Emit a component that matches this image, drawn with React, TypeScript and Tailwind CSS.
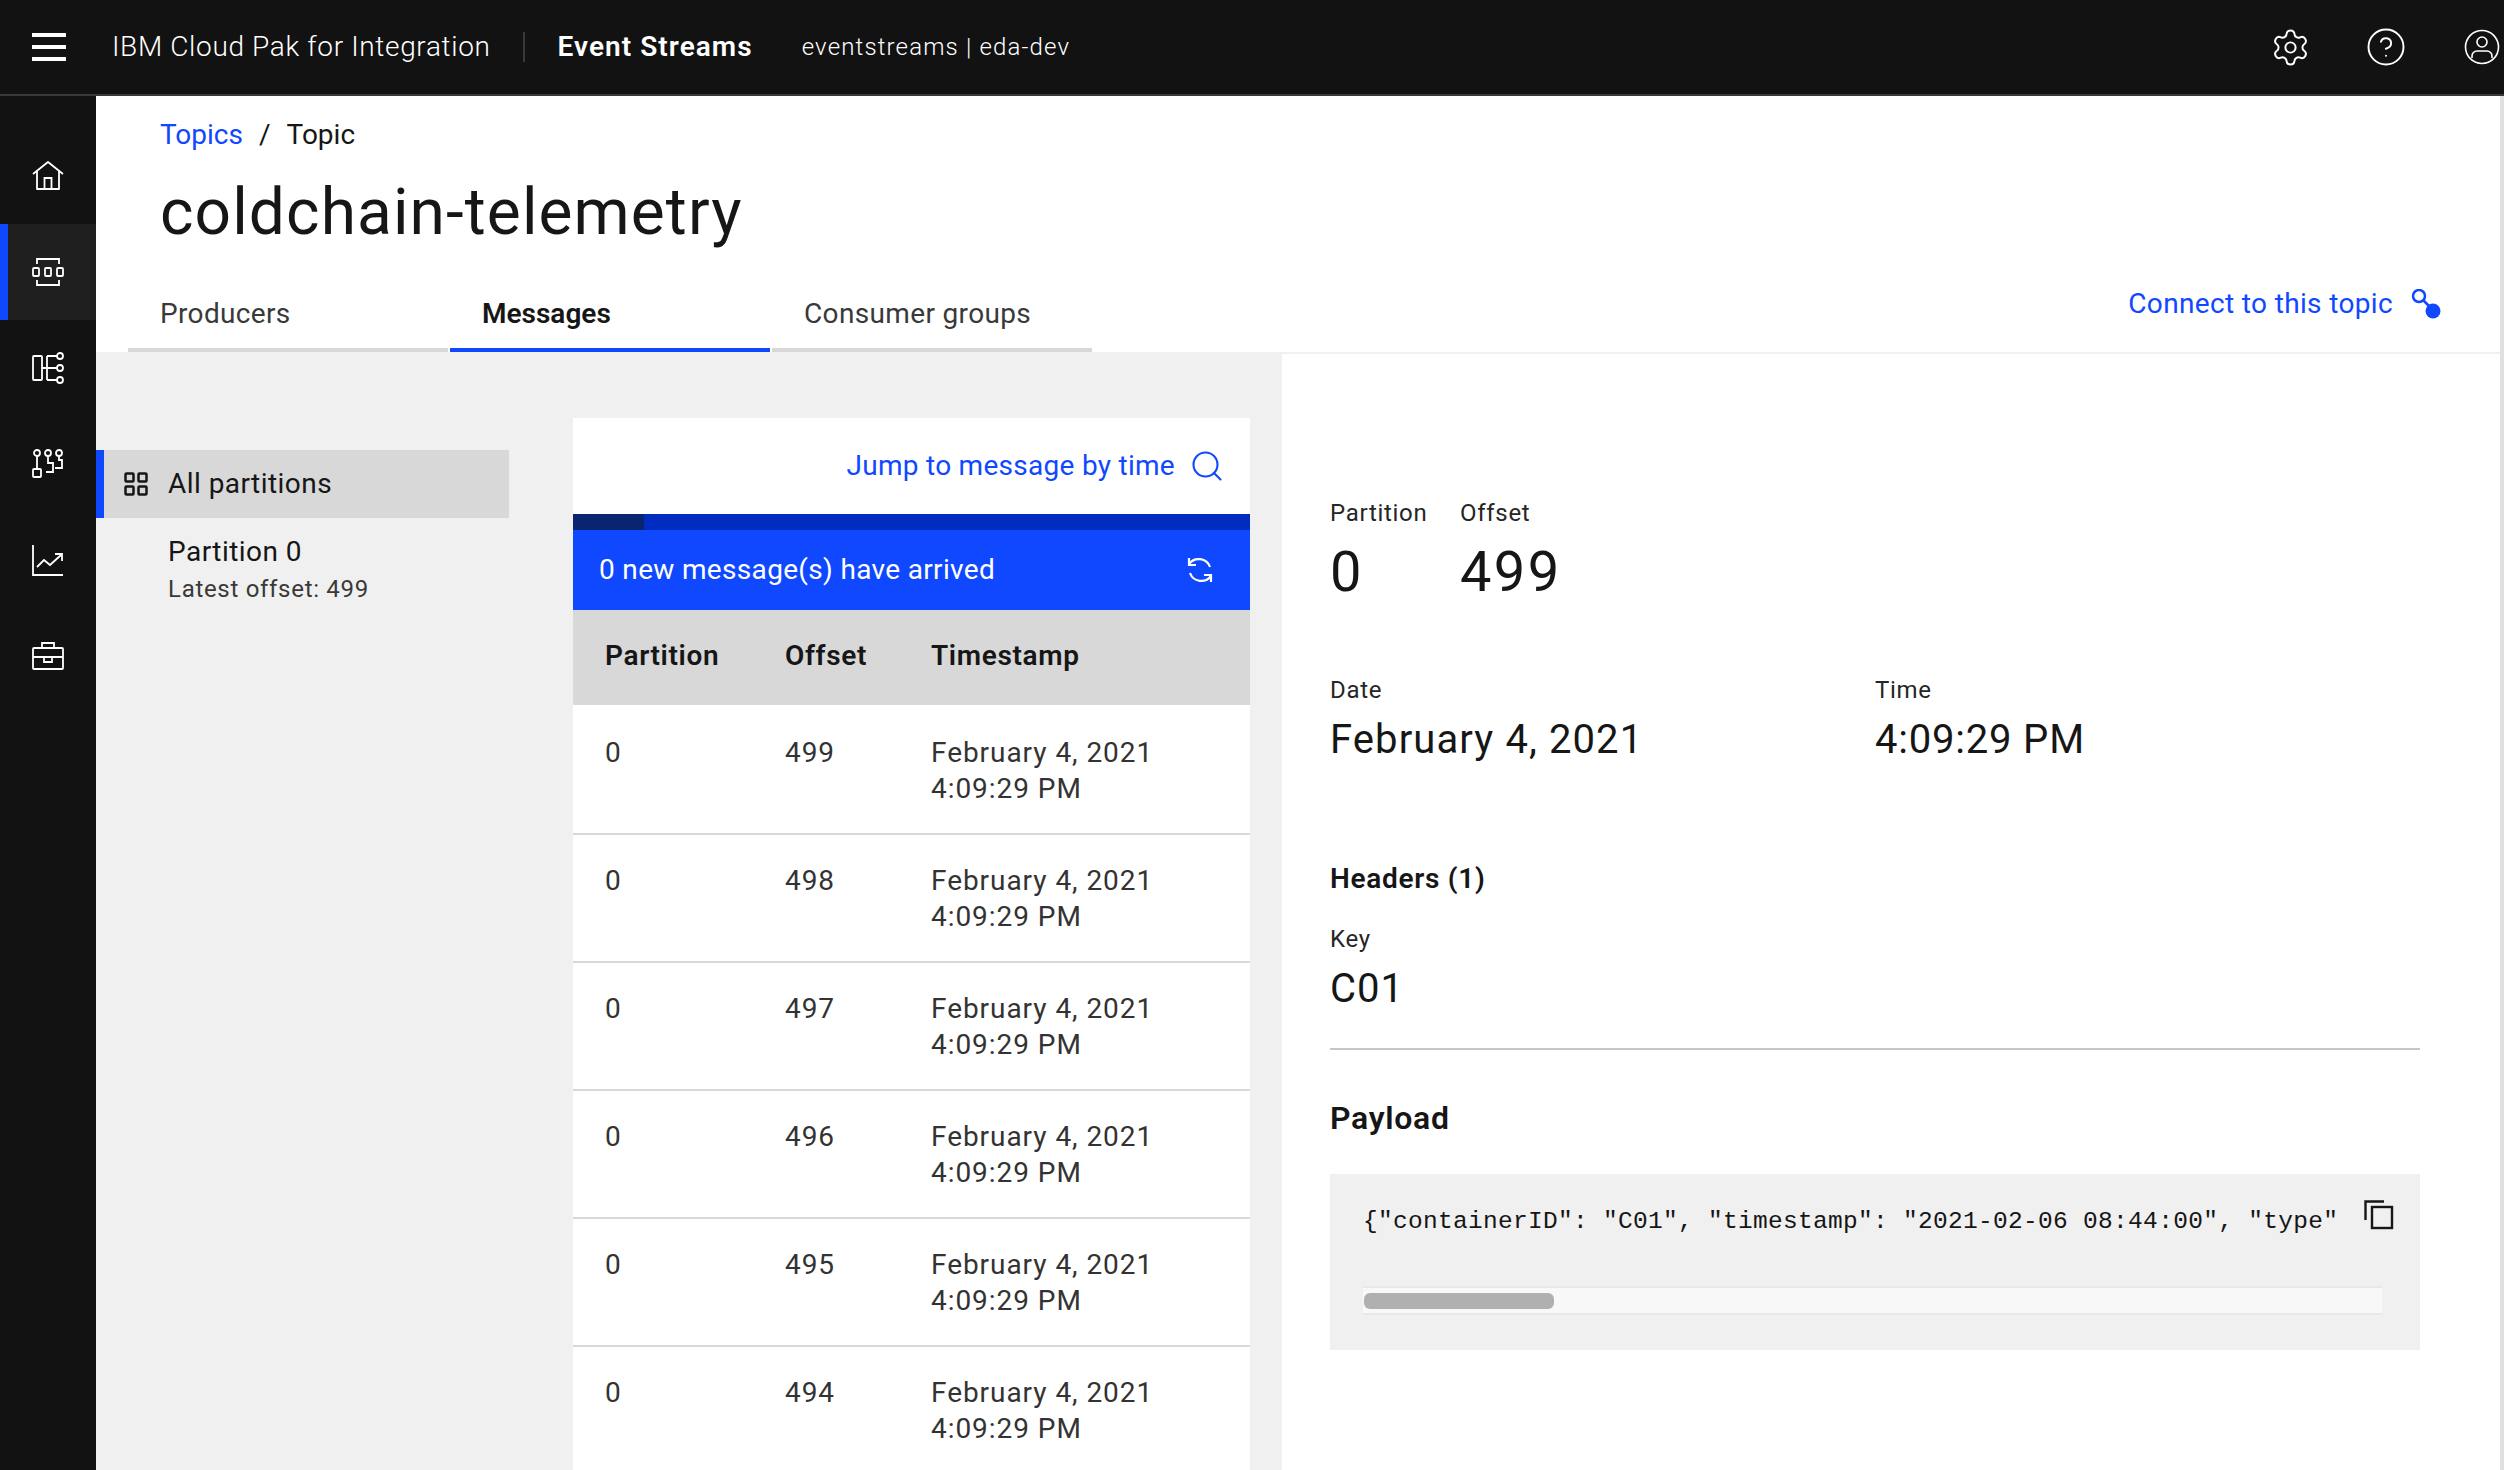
import React from 'react';
import { Search, Settings, CircleHelp } from 'lucide-react';

const rows = [499, 498, 497, 496, 495, 494];

const RailIcon = ({ children }: { children: React.ReactNode }) => (
  <svg width="32" height="32" viewBox="0 0 32 32" fill="none" stroke="white" strokeWidth="1.8">
    {children}
  </svg>
);

const railIcons = [
  <RailIcon key="home">
    <path d="M1 14 16 2l15 12M5 11v18h22V11" strokeLinejoin="round" />
    <path d="M12.5 29V18h7v11" />
  </RailIcon>,
  <RailIcon key="topics">
    <path d="M5 8V3h22v5M5 24v5h22v-5" />
    <rect x="1" y="12" width="6" height="8" rx="1" />
    <rect x="13" y="12" width="6" height="8" rx="1" />
    <rect x="25" y="12" width="6" height="8" rx="1" />
  </RailIcon>,
  <RailIcon key="schemas">
    <rect x="1" y="4" width="9" height="24" rx="1" />
    <path d="M10 16h17M15 4h12M15 28h12M15 4v24" />
    <circle cx="28" cy="4" r="3" fill="#121212" />
    <circle cx="28" cy="16" r="3" fill="#121212" />
    <circle cx="28" cy="28" r="3" fill="#121212" />
  </RailIcon>,
  <RailIcon key="groups">
    <circle cx="5" cy="5" r="3" />
    <circle cx="16" cy="5" r="3" />
    <circle cx="27" cy="5" r="3" />
    <rect x="1" y="21" width="8" height="8" rx="1" />
    <path d="M5 8v13M16 8v7h5v9h-7M27 8v4h3v8h-7" />
  </RailIcon>,
  <RailIcon key="monitoring">
    <path d="M1 1v30h30" />
    <path d="m5 23 7-7 6 5 11-10M23 10h7v7" />
  </RailIcon>,
  <RailIcon key="toolbox">
    <rect x="1" y="8" width="30" height="21" rx="1" />
    <path d="M10 8V3h12v5M1 17h30" />
    <path d="M12 17v5h8v-5" />
  </RailIcon>,
];

const Label = ({ children }: { children: React.ReactNode }) => (
  <div className="text-[24px] leading-[32px] tracking-[0.7px] text-[#262626]">{children}</div>
);

export default function App() {
  return (
    <div className="flex h-[1470px] w-[2504px] flex-col overflow-hidden bg-white font-[Roboto,sans-serif] text-[#161616]">
      {/* top bar */}
      <header className="flex h-[96px] shrink-0 items-center border-b-2 border-[#393939] bg-[#121212] text-white">
        <div className="ml-[32px] flex h-[28px] w-[34px] flex-col justify-between">
          <div className="h-[4px] bg-white" />
          <div className="h-[4px] bg-white" />
          <div className="h-[4px] bg-white" />
        </div>
        <span className="ml-[46px] text-[28px] font-light tracking-[0.65px]">IBM Cloud Pak for Integration</span>
        <div className="ml-[32px] h-[30px] w-[2px] bg-[#393939]" />
        <span className="ml-[33px] text-[28px] font-semibold tracking-[1.05px]">Event Streams</span>
        <span className="ml-[49px] text-[24px] font-light tracking-[1.15px]">eventstreams | eda-dev</span>
        <div className="ml-auto mr-[4px] flex gap-[60px]">
          <div className="flex h-[36px] w-[36px] items-center justify-center">
            <Settings size={41} strokeWidth={1.15} className="shrink-0" />
          </div>
          <div className="flex h-[36px] w-[36px] items-center justify-center">
            <CircleHelp size={42} strokeWidth={1.1} className="shrink-0" />
          </div>
          <svg width="36" height="36" viewBox="0 0 36 36" fill="none" stroke="white" strokeWidth="1.6">
            <circle cx="18" cy="18" r="16.5" />
            <circle cx="18" cy="13" r="5" />
            <path d="M8 29v-2a5 5 0 0 1 5-5h10a5 5 0 0 1 5 5v2" />
          </svg>
        </div>
      </header>

      <div className="flex min-h-0 flex-1">
        {/* side rail */}
        <nav className="w-[96px] shrink-0 bg-[#121212] pt-[32px]">
          {railIcons.map((icon, i) => (
            <div
              key={i}
              className={
                i === 1
                  ? 'flex h-[96px] items-center justify-center border-l-8 border-[#0f48ff] bg-[#1f1f1f] pr-[8px]'
                  : 'flex h-[96px] items-center justify-center'
              }
            >
              {icon}
            </div>
          ))}
        </nav>

        <main className="flex min-w-0 flex-1 flex-col border-r-4 border-[#e0e0e0]">
          {/* page header */}
          <div className="h-[256px] shrink-0 pt-[21px]">
            <div className="ml-[64px] flex h-[36px] items-center text-[28px]">
              <span className="text-[#0f48ff]">Topics</span>
              <span className="mx-[16px]">/</span>
              <span>Topic</span>
            </div>
            <h1 className="ml-[64px] mt-[22px] text-[64px] leading-[76px] tracking-[1.1px]">coldchain-telemetry</h1>
            <div className="ml-[32px] mt-[33px] flex h-[68px] items-stretch">
              <div className="mr-[2px] w-[320px] border-b-4 border-[#d8d8d8] pl-[32px] pt-[12px] text-[28px] leading-[36px] tracking-[0.35px] text-[#393939]">
                Producers
              </div>
              <div className="mr-[2px] w-[320px] border-b-4 border-[#0f48ff] pl-[32px] pt-[12px] text-[28px] font-semibold leading-[36px]">
                Messages
              </div>
              <div className="w-[320px] border-b-4 border-[#d8d8d8] pl-[32px] pt-[12px] text-[28px] leading-[36px] tracking-[0.35px] text-[#393939]">
                Consumer groups
              </div>
              <div className="ml-auto mr-[59px] flex h-[40px] items-center text-[28px] tracking-[0.35px] text-[#0f48ff]">
                Connect to this topic
                <svg className="ml-[18px]" width="30" height="30" viewBox="0 0 30 30" fill="none">
                  <circle cx="8" cy="7" r="6" stroke="#0f48ff" strokeWidth="2.5" />
                  <path d="m12 11 8 8" stroke="#0f48ff" strokeWidth="2.5" />
                  <circle cx="22" cy="22" r="7.5" fill="#0f48ff" />
                </svg>
              </div>
            </div>
          </div>

          {/* body */}
          <div className="flex min-h-0 flex-1 border-t-2 border-[#f0f0f0]">
            <div className="flex w-[1186px] shrink-0 bg-[#f0f0f0]">
              {/* partitions */}
              <div className="w-[413px] shrink-0 pt-[96px]">
                <div className="flex h-[68px] items-center border-l-8 border-[#0f48ff] bg-[#d8d8d8] pl-[20px] text-[28px]">
                  <svg width="24" height="24" viewBox="0 0 24 24" fill="none" stroke="#161616" strokeWidth="2.5" className="shrink-0">
                    <rect x="1.5" y="1.5" width="8" height="8" rx="1" />
                    <rect x="14.5" y="1.5" width="8" height="8" rx="1" />
                    <rect x="1.5" y="14.5" width="8" height="8" rx="1" />
                    <rect x="14.5" y="14.5" width="8" height="8" rx="1" />
                  </svg>
                  <span className="ml-[20px] tracking-[0.45px]">All partitions</span>
                </div>
                <div className="pl-[72px] pt-[16px]">
                  <div className="text-[28px] leading-[36px] tracking-[0.45px]">Partition 0</div>
                  <div className="mt-[3px] text-[24px] leading-[32px] tracking-[0.7px] text-[#393939]">Latest offset: 499</div>
                </div>
              </div>

              {/* messages table */}
              <div className="ml-[64px] mt-[64px] w-[677px] shrink-0 overflow-hidden bg-white">
                <div className="flex h-[96px] items-center justify-end gap-[14px] pr-[25px] text-[28px] tracking-[0.28px] text-[#0f48ff]">
                  Jump to message by time
                  <Search size={36} strokeWidth={1.4} />
                </div>
                <div className="h-[16px] bg-[#002cc0]">
                  <div className="h-full w-[71px] bg-[#0a2472]" />
                </div>
                <div className="flex h-[80px] items-center justify-between bg-[#0f48ff] pl-[26px] pr-[36px] text-[28px] tracking-[0.33px] text-white">
                  0 new message(s) have arrived
                  <svg width="28" height="28" viewBox="0 0 28 28" fill="none" stroke="white" strokeWidth="2.2">
                    <path d="M3 8a12 12 0 0 1 21 3M25 20a12 12 0 0 1-21-3" />
                    <path d="M3 2v7h7M25 26v-7h-7" />
                  </svg>
                </div>
                <div className="grid h-[95px] grid-cols-[180px_146px_1fr] items-center bg-[#d8d8d8] pb-[4px] pl-[32px] text-[28px] font-semibold tracking-[0.65px]">
                  <span>Partition</span>
                  <span>Offset</span>
                  <span>Timestamp</span>
                </div>
                <div className="pt-[2px]">
                  {rows.map((offset) => (
                    <div
                      key={offset}
                      className="grid h-[128px] grid-cols-[180px_146px_1fr] border-b-2 border-[#d8d8d8] pl-[32px] pt-[28px] text-[28px] leading-[36px] tracking-[0.95px] text-[#333333]"
                    >
                      <span>0</span>
                      <span>{offset}</span>
                      <span>
                        February 4, 2021
                        <br />
                        4:09:29 PM
                      </span>
                    </div>
                  ))}
                </div>
              </div>
            </div>

            {/* message detail */}
            <div className="min-w-0 flex-1 pl-[48px] pr-[80px] pt-[143px]">
              <div className="flex">
                <div className="w-[130px]">
                  <Label>Partition</Label>
                  <div className="mt-[9px] text-[56px] leading-[68px]">0</div>
                </div>
                <div>
                  <Label>Offset</Label>
                  <div className="mt-[9px] text-[56px] leading-[68px] tracking-[2.4px]">499</div>
                </div>
              </div>
              <div className="mt-[68px] flex">
                <div className="w-[545px]">
                  <Label>Date</Label>
                  <div className="mt-[10px] text-[40px] leading-[48px] tracking-[1.1px]">February 4, 2021</div>
                </div>
                <div>
                  <Label>Time</Label>
                  <div className="mt-[10px] text-[40px] leading-[48px] tracking-[0.8px]">4:09:29 PM</div>
                </div>
              </div>
              <div className="mt-[97px] text-[28px] font-semibold leading-[36px] tracking-[0.7px]">Headers (1)</div>
              <div className="mt-[26px]">
                <Label>Key</Label>
              </div>
              <div className="mt-[10px] text-[40px] leading-[48px] tracking-[1px]">C01</div>
              <div className="mt-[35px] h-[2px] bg-[#c6c6c6]" />
              <div className="mt-[48px] text-[32px] font-semibold leading-[40px] tracking-[0.7px]">Payload</div>
              <div className="relative mt-[36px] h-[176px] bg-[#f0f0f0] pl-[33px] pr-[26px] pt-[32px]">
                <div className="overflow-hidden whitespace-nowrap font-['Liberation_Mono',monospace] text-[24.5px] leading-[32px] tracking-[0.3px]">
                  {'{"containerID": "C01", "timestamp": "2021-02-06 08:44:00", "type"'}
                </div>
                <svg className="absolute right-[26px] top-[26px]" width="30" height="30" viewBox="0 0 30 30" fill="none" stroke="#161616" strokeWidth="2.4">
                  <rect x="8" y="7" width="20" height="21" />
                  <path d="M1.5 20V1.5H20" />
                </svg>
                <div className="mr-[12px] mt-[48px] flex h-[29px] items-center border-y-2 border-[#e8e8e8] bg-[#f8f8f8] pl-[1px]">
                  <div className="h-[16px] w-[190px] rounded-[6px] bg-[#b0b0b0]" />
                </div>
              </div>
            </div>
          </div>
        </main>
      </div>
    </div>
  );
}
